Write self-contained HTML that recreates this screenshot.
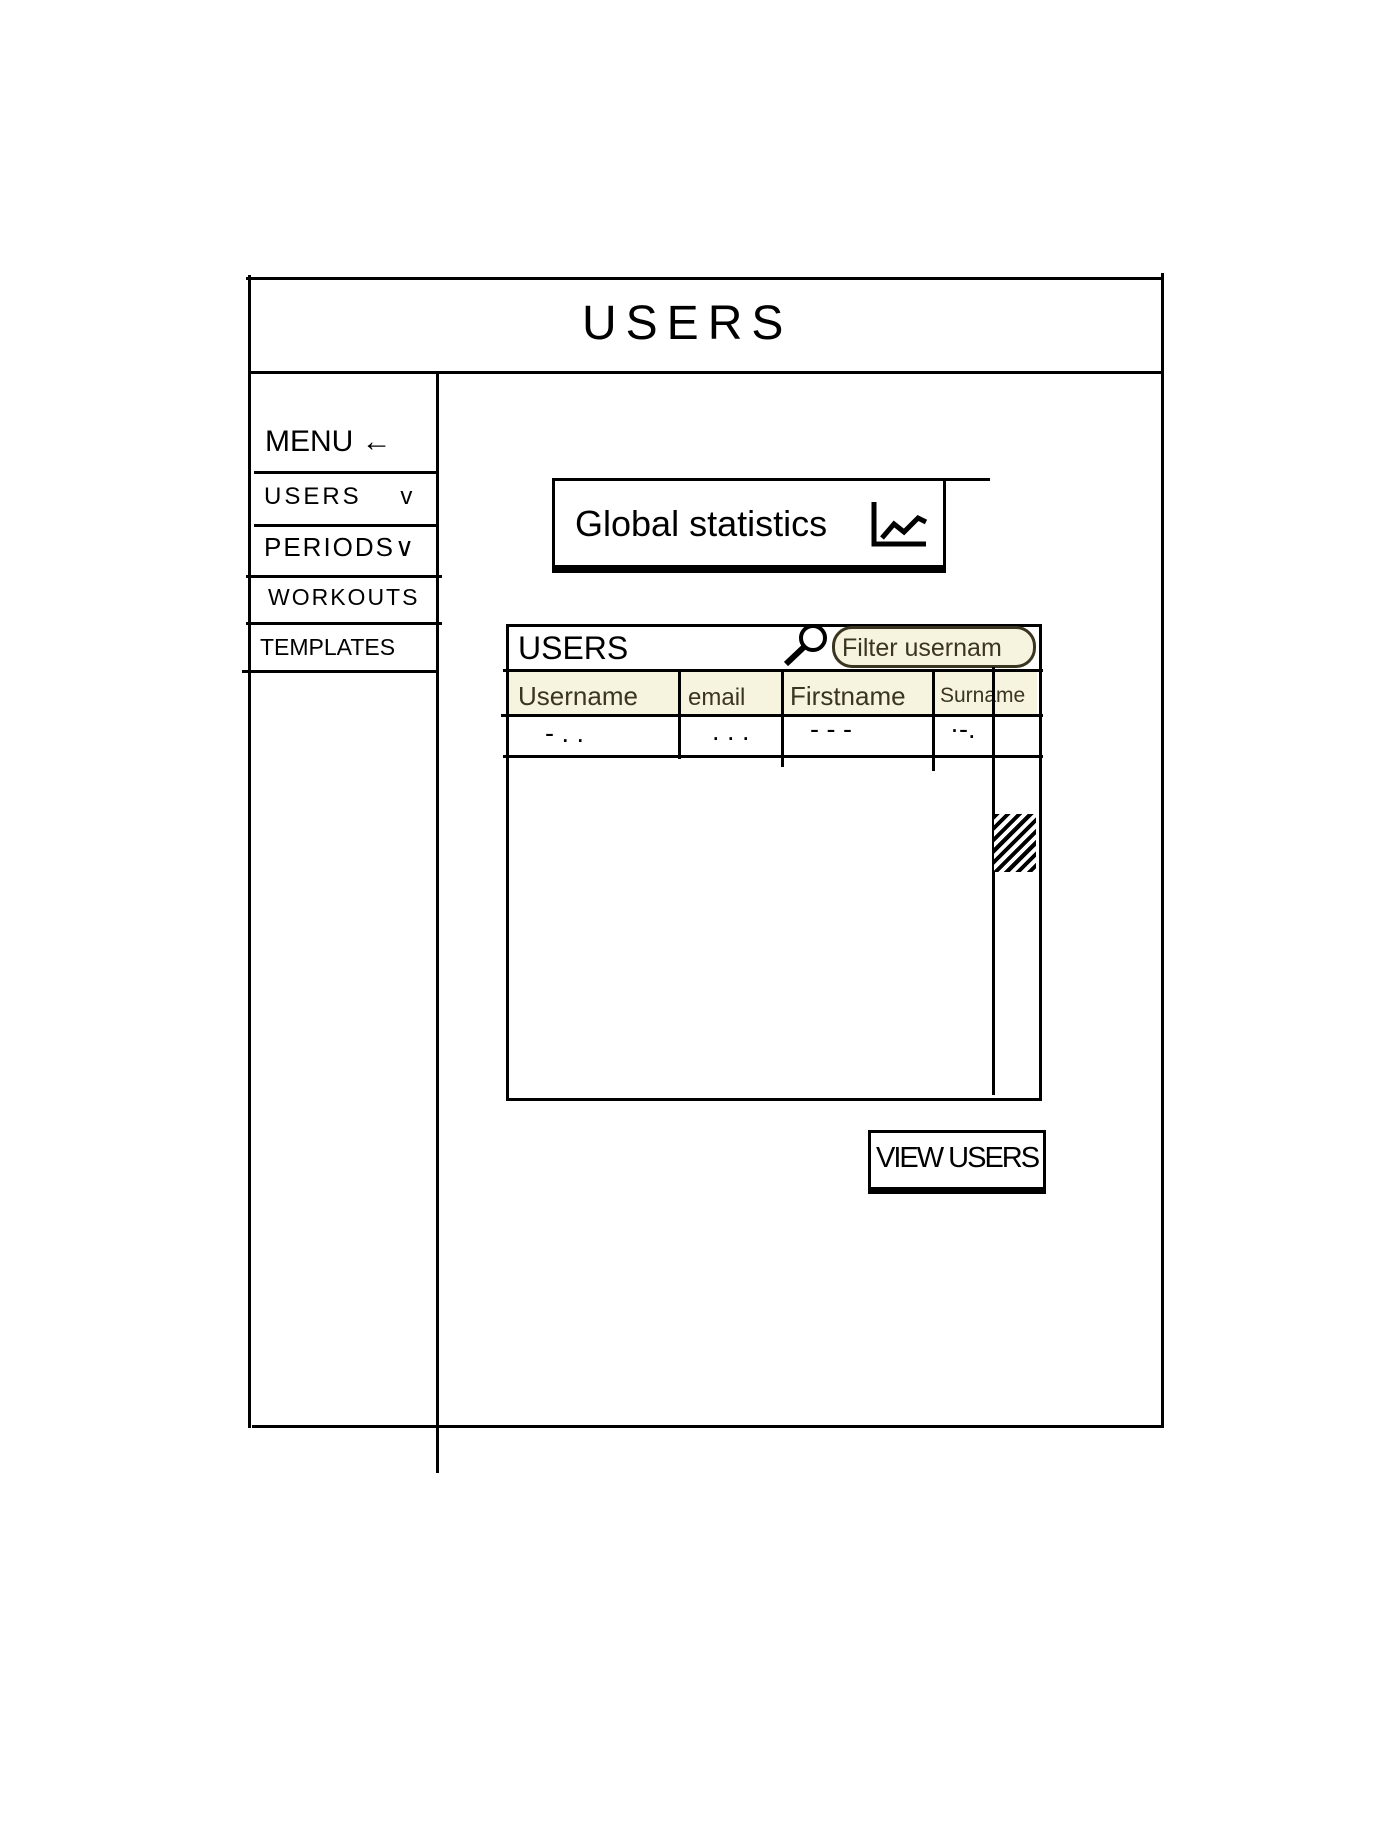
<!DOCTYPE html>
<html><head><style>
body{margin:0;width:1380px;height:1840px;background:#fff;position:relative;font-family:"Liberation Sans",sans-serif;overflow:hidden}
.a{position:absolute}
.h{position:absolute;height:3px;background:#000}
.v{position:absolute;width:3px;background:#000}
.t{position:absolute;font-size:27px;color:#000;white-space:nowrap}
</style></head><body>
<div class="h" style="left:246px;top:277px;width:918px"></div>
<div class="h" style="left:248px;top:371px;width:916px"></div>
<div class="h" style="left:252px;top:1425px;width:912px"></div>
<div class="v" style="left:248px;top:275px;height:1153px"></div>
<div class="v" style="left:1161px;top:273px;height:1155px"></div>
<div class="t" style="left:582px;top:296px;font-size:48px;letter-spacing:9px">USERS</div>
<div class="v" style="left:436px;top:373px;height:1100px"></div>
<div class="t" style="left:265px;top:425px;font-size:30px">MENU ←</div>
<div class="h" style="left:254px;top:471px;width:182px"></div>
<div class="t" style="left:264px;top:483px;font-size:24px;letter-spacing:3px">USERS&nbsp;&nbsp;&nbsp;&nbsp;v</div>
<div class="h" style="left:254px;top:524px;width:182px"></div>
<div class="t" style="left:264px;top:532px;font-size:26px;letter-spacing:2px">PERIODS∨</div>
<div class="h" style="left:246px;top:575px;width:196px"></div>
<div class="t" style="left:268px;top:584px;font-size:23px;letter-spacing:2px">WORKOUTS</div>
<div class="h" style="left:246px;top:622px;width:196px"></div>
<div class="t" style="left:260px;top:634px;font-size:23px">TEMPLATES</div>
<div class="h" style="left:242px;top:670px;width:194px"></div>
<!-- global stats -->
<div class="a" style="left:552px;top:478px;width:388px;height:84px;border:3px solid #000;border-bottom:8px solid #000"></div>
<div class="h" style="left:940px;top:478px;width:50px"></div>
<div class="t" style="left:575px;top:503px;font-size:36px">Global statistics</div>
<svg class="a" style="left:870px;top:500px" width="60" height="50"><path d="M4 2V44H56M12 38L24 24L34 32L48 18L56 22" stroke="#000" stroke-width="5" fill="none"/></svg>
<!-- table -->
<div class="a" style="left:506px;top:624px;width:530px;height:471px;border:3px solid #000"></div>
<div class="a" style="left:509px;top:671px;width:528px;height:44px;background:#f6f3de"></div>
<div class="a" style="left:832px;top:626px;width:204px;height:42px;border-radius:20px;background:#f6f3de;border:3px solid #3a3520;box-sizing:border-box"></div>
<div class="t" style="left:518px;top:630px;font-size:32px">USERS</div>
<svg class="a" style="left:768px;top:620px" width="70" height="50"><circle cx="45" cy="18" r="12" stroke="#000" stroke-width="4" fill="none"/><path d="M36 27L18 44" stroke="#000" stroke-width="6"/></svg>
<div class="t" style="left:842px;top:634px;font-size:25px;color:#3a3520">Filter usernam</div>
<div class="h" style="left:503px;top:669px;width:540px"></div>
<div class="h" style="left:501px;top:714px;width:542px"></div>
<div class="h" style="left:503px;top:755px;width:540px"></div>
<div class="t" style="left:518px;top:681px;font-size:26px;color:#3a3520">Username</div>
<div class="t" style="left:688px;top:684px;font-size:24px;color:#3a3520">email</div>
<div class="t" style="left:790px;top:681px;font-size:26px;color:#3a3520">Firstname</div>
<div class="t" style="left:940px;top:684px;font-size:21px;color:#3a3520">Surname</div>
<div class="v" style="left:678px;top:671px;height:88px"></div>
<div class="v" style="left:781px;top:671px;height:96px"></div>
<div class="v" style="left:932px;top:671px;height:100px"></div>
<div class="v" style="left:992px;top:667px;height:428px"></div>
<div class="t" style="left:545px;top:718px">- . .</div>
<div class="t" style="left:712px;top:716px">. . .</div>
<div class="t" style="left:810px;top:714px">- - -</div>
<div class="t" style="left:950px;top:714px">·-.</div>
<div class="a" style="left:994px;top:814px;width:42px;height:58px;background:repeating-linear-gradient(135deg,#000 0 4px,#fff 4px 8px)"></div>
<!-- button -->
<div class="a" style="left:868px;top:1130px;width:172px;height:54px;border:3px solid #000;border-bottom:7px solid #000"></div>
<div class="t" style="left:876px;top:1142px;font-size:29px;letter-spacing:-2px">VIEW USERS</div>
</body></html>
